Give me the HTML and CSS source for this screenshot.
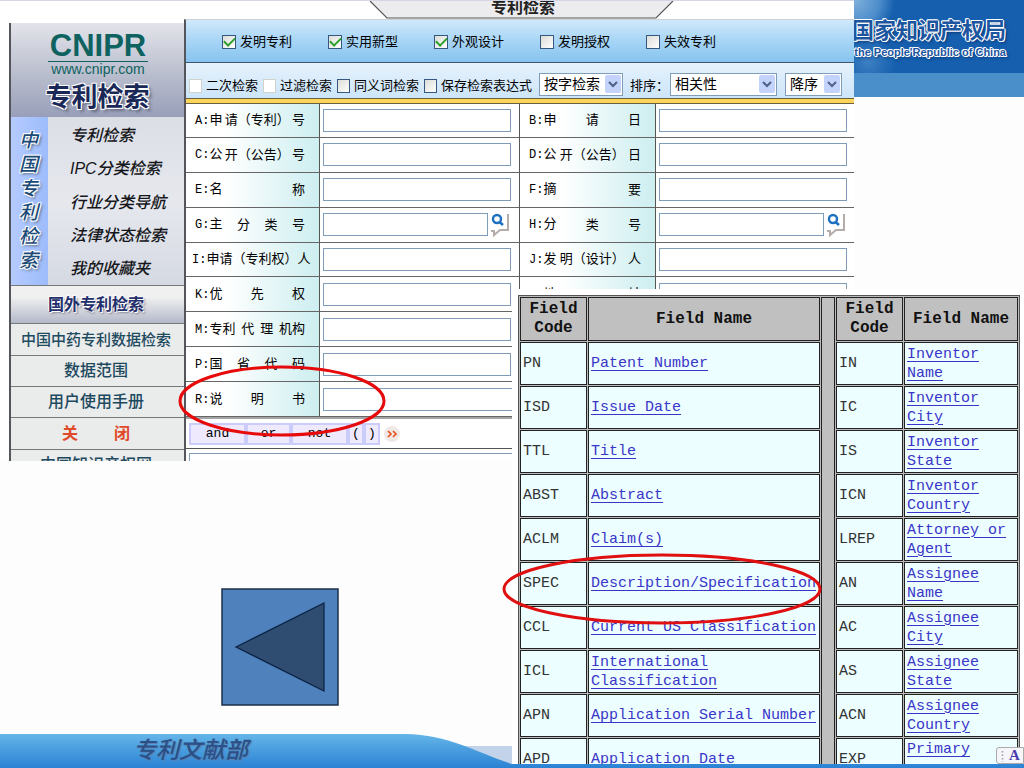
FILE: index.html
```html
<!DOCTYPE html>
<html lang="zh-CN">
<head>
<meta charset="utf-8">
<title>专利检索</title>
<link rel="stylesheet" href="styles.css">
</head>
<body>
<main class="slide">
  <header class="banner">
    <div class="banner-title">国家知识产权局</div>
    <div class="banner-sub">of the People'Republic of China</div>
  </header>

  <section class="cnipr">
    <div class="tab">
      <svg class="tab-shape" viewBox="0 0 308 18" width="308" height="18" aria-hidden="true"><path d="M1 0 18 17H287L304 0" fill="#ececee" stroke="#555" stroke-width="1.2"/></svg>
      <span class="tab-text">专利检索</span>
    </div>
    <div class="cnipr-body">
      <aside class="side">
        <div class="logo">
          <div class="logo-name">CNIPR</div>
          <div class="logo-url">www.cnipr.com</div>
          <div class="logo-title">专利检索</div>
        </div>
        <div class="group">
          <div class="group-name">中国专利检索</div>
          <nav class="group-links">
            <a href="#">专利检索</a>
            <a href="#">IPC分类检索</a>
            <a href="#">行业分类导航</a>
            <a href="#">法律状态检索</a>
            <a href="#">我的收藏夹</a>
          </nav>
        </div>
        <nav class="links">
          <a class="foreign" href="#">国外专利检索</a>
          <a class="long" href="#">中国中药专利数据检索</a>
          <a href="#">数据范围</a>
          <a href="#">用户使用手册</a>
          <a class="close" href="#"><span>关</span><span>闭</span></a>
          <a href="#">中国知识产权网</a>
        </nav>
      </aside>

      <form class="search">
        <div class="types">
          <label><input type="checkbox" checked>发明专利</label>
          <label><input type="checkbox" checked>实用新型</label>
          <label><input type="checkbox" checked>外观设计</label>
          <label><input type="checkbox">发明授权</label>
          <label><input type="checkbox">失效专利</label>
        </div>
        <div class="options">
          <label><input type="checkbox" disabled>二次检索</label>
          <label><input type="checkbox" disabled>过滤检索</label>
          <label><input type="checkbox">同义词检索</label>
          <label><input type="checkbox">保存检索表达式</label>
          <span class="pick mode"><select aria-label="检索方式"><option>按字检索</option></select><svg viewBox="0 0 16 18" width="16" height="18"><rect width="16" height="18" rx="2" fill="#c3d3fb"/><path d="M4 7l4 4 4-4" fill="none" stroke="#4d6185" stroke-width="2"/></svg></span>
          <label class="sort" for="sort">排序：</label>
          <span class="pick by"><select id="sort"><option>相关性</option></select><svg viewBox="0 0 16 18" width="16" height="18"><rect width="16" height="18" rx="2" fill="#c3d3fb"/><path d="M4 7l4 4 4-4" fill="none" stroke="#4d6185" stroke-width="2"/></svg></span>
          <span class="pick order"><select aria-label="顺序"><option>降序</option></select><svg viewBox="0 0 16 18" width="16" height="18"><rect width="16" height="18" rx="2" fill="#c3d3fb"/><path d="M4 7l4 4 4-4" fill="none" stroke="#4d6185" stroke-width="2"/></svg></span>
        </div>
        <div class="fields">
          <label for="fa"><span><i>A:</i>申</span><span>请（专利）</span><span>号</span></label><div><input id="fa" type="text"></div>
          <label for="fb"><span><i>B:</i>申</span><span>请</span><span>日</span></label><div><input id="fb" type="text"></div>
          <label for="fc"><span><i>C:</i>公</span><span>开（公告）</span><span>号</span></label><div><input id="fc" type="text"></div>
          <label for="fd"><span><i>D:</i>公</span><span>开（公告）</span><span>日</span></label><div><input id="fd" type="text"></div>
          <label for="fe"><span><i>E:</i>名</span><span>称</span></label><div><input id="fe" type="text"></div>
          <label for="ff"><span><i>F:</i>摘</span><span>要</span></label><div><input id="ff" type="text"></div>
          <label for="fg"><span><i>G:</i>主</span><span>分</span><span>类</span><span>号</span></label><div><input id="fg" class="short" type="text"><button type="button" class="look" aria-label="查找"><svg viewBox="0 0 22 26" width="22" height="26"><path d="M20 2V18H12L6 23V19H3" fill="none" stroke="#b4aca8" stroke-width="2"/><circle cx="9" cy="7" r="4" fill="none" stroke="#1d6fc0" stroke-width="2.4"/><path d="M11.500 10l3.500 3" stroke="#1d6fc0" stroke-width="2.600"/></svg></button></div>
          <label for="fh"><span><i>H:</i>分</span><span>类</span><span>号</span></label><div><input id="fh" class="short" type="text"><button type="button" class="look" aria-label="查找"><svg viewBox="0 0 22 26" width="22" height="26"><path d="M20 2V18H12L6 23V19H3" fill="none" stroke="#b4aca8" stroke-width="2"/><circle cx="9" cy="7" r="4" fill="none" stroke="#1d6fc0" stroke-width="2.4"/><path d="M11.500 10l3.500 3" stroke="#1d6fc0" stroke-width="2.600"/></svg></button></div>
          <label class="tight" for="fi"><span><i>I:</i>申请（专利权）人</span></label><div><input id="fi" type="text"></div>
          <label for="fj"><span><i>J:</i>发</span><span>明（设计）</span><span>人</span></label><div><input id="fj" type="text"></div>
          <label for="fk"><span><i>K:</i>优</span><span>先</span><span>权</span></label><div><input id="fk" type="text"></div>
          <label for="fl"><span><i>L:</i>地</span><span>址</span></label><div><input id="fl" type="text"></div>
          <label for="fm"><span><i>M:</i>专利</span><span>代</span><span>理</span><span>机构</span></label><div class="wide"><input id="fm" type="text"></div>
          <label for="fp"><span><i>P:</i>国</span><span>省</span><span>代</span><span>码</span></label><div class="wide"><input id="fp" type="text"></div>
          <label for="fr"><span><i>R:</i>说</span><span>明</span><span>书</span></label><div class="wide"><input id="fr" class="full" type="text"></div>
        </div>
        <div class="ops">
          <button type="button">and</button><button type="button" class="or">or</button><button type="button">not</button><button type="button" class="paren">(</button><button type="button" class="paren">)</button>
          <svg viewBox="0 0 18 18" width="18" height="18" aria-hidden="true"><circle cx="9" cy="9" r="8" fill="#f0e8e4"/><path d="M5 6l3 3-3 3M10 6l3 3-3 3" fill="none" stroke="#e8501a" stroke-width="1.6"/></svg>
        </div>
        <div class="expr"><textarea aria-label="检索表达式"></textarea></div>
      </form>
    </div>
  </section>

  <section class="codes">
    <table>
      <colgroup><col class="c-code"><col><col class="c-gap"><col class="c-code"><col class="c-name"></colgroup>
      <tr><th>Field Code</th><th>Field Name</th><td class="gap" rowspan="11"></td><th>Field Code</th><th>Field Name</th></tr>
      <tr><td>PN</td><td><a href="#">Patent Number</a></td><td>IN</td><td><a href="#">Inventor<br>Name</a></td></tr>
      <tr><td>ISD</td><td><a href="#">Issue Date</a></td><td>IC</td><td><a href="#">Inventor<br>City</a></td></tr>
      <tr><td>TTL</td><td><a href="#">Title</a></td><td>IS</td><td><a href="#">Inventor<br>State</a></td></tr>
      <tr><td>ABST</td><td><a href="#">Abstract</a></td><td>ICN</td><td><a href="#">Inventor<br>Country</a></td></tr>
      <tr><td>ACLM</td><td><a href="#">Claim(s)</a></td><td>LREP</td><td><a href="#">Attorney or<br>Agent</a></td></tr>
      <tr><td>SPEC</td><td><a href="#">Description/Specification</a></td><td>AN</td><td><a href="#">Assignee<br>Name</a></td></tr>
      <tr><td>CCL</td><td><a href="#">Current US Classification</a></td><td>AC</td><td><a href="#">Assignee<br>City</a></td></tr>
      <tr><td>ICL</td><td><a href="#">International<br>Classification</a></td><td>AS</td><td><a href="#">Assignee<br>State</a></td></tr>
      <tr><td>APN</td><td><a href="#">Application Serial Number</a></td><td>ACN</td><td><a href="#">Assignee<br>Country</a></td></tr>
      <tr><td>APD</td><td><a href="#">Application Date</a></td><td>EXP</td><td class="top"><a href="#">Primary</a></td></tr>
    </table>
  </section>

  <svg class="ring ring-spec-cn" viewBox="0 0 208 72" width="208" height="72" aria-hidden="true"><ellipse cx="104" cy="36" rx="102" ry="34" fill="none" stroke="#e60a0a" stroke-width="3"/></svg>
  <svg class="ring ring-spec-us" viewBox="0 0 320 72" width="320" height="72" aria-hidden="true"><ellipse cx="160" cy="36" rx="158" ry="34" fill="none" stroke="#e01010" stroke-width="3"/></svg>

  <button type="button" class="back" aria-label="返回"><svg viewBox="0 0 118 118" width="118" height="118"><rect x="1" y="1" width="116" height="116" fill="#4f81bd" stroke="#1c2f48" stroke-width="1.500"/><path d="M15 59 103 15V103Z" fill="#2f4d71" stroke="#0b2244" stroke-width="1.200"/></svg></button>

  <footer class="foot">
    <svg class="wave" viewBox="0 0 1024 34" preserveAspectRatio="none" aria-hidden="true">
      <defs><linearGradient id="w" x1="0" y1="0" x2="0" y2="1"><stop offset="0" stop-color="#64b5e8"/><stop offset="1" stop-color="#2b82d4"/></linearGradient></defs>
      <path d="M462 12H512V34H462Z" fill="#c3d3ea"/>
      <path d="M0 0H405C450 1 475 18 512 30H1024V34H0Z" fill="url(#w)"/>
    </svg>
    <span class="foot-text">专利文献部</span>
  </footer>

  <div class="ime"><svg viewBox="0 0 3 12" width="3" height="12" aria-hidden="true"><path d="M1.500 1v11" stroke="#9a9aa8" stroke-width="1.500" stroke-dasharray="1.500 2"/></svg><b>A</b></div>
</main>
</body>
</html>
```
FILE: styles.css
```css
* { box-sizing: border-box; }
body {
  margin: 0;
  font-family: "Liberation Sans", "Noto Sans CJK SC", sans-serif;
  font-size: 13px;
  color: #000;
}
a { color: inherit; text-decoration: none; }
input, select, button, textarea { font: inherit; color: inherit; margin: 0; }

.slide {
  position: relative;
  display: flex;
  flex-direction: column;
  justify-content: space-between;
  min-height: 100vh;
  overflow: hidden;
  background: #fdfdfd;
}

.banner {
  height: 97px;
  padding: 16px 18px 0 0;
  border-bottom: 24px solid #4a8fca;
  background: radial-gradient(circle at 855px 0, #7fb0dc 0, #4e8ecb 24px, transparent 40px),
    radial-gradient(circle at 868px 62px, #3d7fc2 0, transparent 28px), #155fae;
  text-align: right;
  white-space: nowrap;
  color: #1c55a0;
  text-shadow: 1px 0 #fff, -1px 0 #fff, 0 1px #fff, 0 -1px #fff, 1px 1px #fff, -1px -1px #fff, 2px 2px 3px #0a3470;
}
.banner-title { font-size: 22px; font-weight: 700; line-height: 30px; }
.banner-sub { font-size: 11px; font-weight: 700; line-height: 12px; }

.cnipr {
  position: absolute;
  left: 0;
  right: 170px;
  top: 0;
  height: 461px;
  overflow: hidden;
  border-top: 1px solid #d3d6e6;
  background: #fff;
}
.tab { display: flex; height: 18px; padding-left: 369px; }
.tab-shape { flex: none; }
.tab-text { margin-left: -186px; font-size: 16px; font-weight: 700; line-height: 13px; color: #222; }
.cnipr-body { display: flex; padding-left: 9px; }

.side {
  flex: none;
  width: 175px;
  margin-top: 4px;
  border-left: 2px solid #55565c;
  background: #eaebeb;
}
.logo {
  height: 94px;
  padding-top: 8px;
  background: linear-gradient(#e3e4ea, #b5bacb 60%, #999fb9);
  text-align: center;
  color: #0e625f;
}
.logo-name { width: 100px; margin: 0 0 0 37px; border-bottom: 1px solid #0e625f; font-size: 31px; font-weight: 700; line-height: 30px; }
.logo-url { width: 100px; margin-left: 37px; font-size: 14px; line-height: 15px; }
.logo-title {
  font-size: 26px;
  font-weight: 700;
  line-height: 40px;
  color: #1a2858;
  text-shadow: 1px 1px #fff, -1px -1px #fff, 1px -1px #fff, -1px 1px #fff, 3px 3px 3px #666b80;
}
.group { display: flex; height: 169px; border-bottom: 1px solid #77787c; background: linear-gradient(#dcdee6, #e6e8ee 50%, #d5d9e2); }
.group-name {
  flex: none;
  width: 37px;
  padding: 12px 8px 0;
  background: linear-gradient(90deg, #b5cbff, #9dbcfb);
  font-size: 19px;
  font-style: italic;
  font-weight: 500;
  line-height: 24px;
  color: #1c4b78;
  text-shadow: 1px 1px #fff, -1px -1px #fff, 1px -1px #fff, -1px 1px #fff, 2px 2px 3px #567;
}
.group-links { display: flex; flex: 1; flex-direction: column; justify-content: space-between; padding: 2px 0 0 22px; font-size: 16px; font-style: italic; font-weight: 500; line-height: 33px; white-space: nowrap; color: #15161a; }
.links a {
  display: flex;
  align-items: center;
  justify-content: center;
  height: 31px;
  border-bottom: 1px solid #77787c;
  padding-right: 3px;
  font-size: 16px;
  font-weight: 500;
  line-height: 20px;
  color: #1e4a60;
  white-space: nowrap;
}
.links a.foreign { height: 38px; background: linear-gradient(#f0f0f0 30%, #b4b9c9); font-weight: 700; color: #24306c; text-shadow: 1px 1px #fff, -1px -1px #fff, 2px 2px 2px #889; }
.links a.long { height: 32px; font-size: 15px; }
.links a.close { height: 32px; gap: 36px; font-weight: 700; color: #e04a2a; }

.search { flex: 1; min-width: 0; border-left: 2px solid #55565c; border-top: 1px solid #c8d0d8; }
.search label { white-space: nowrap; }
.types {
  display: flex;
  align-items: center;
  gap: 36px;
  height: 43px;
  padding: 2px 0 0 36px;
  border-bottom: 1px solid #3c5670;
  background: linear-gradient(#d0e9fb, #a7d5f6 50%, #86c3ef);
}
.types label, .options label { display: flex; align-items: center; gap: 4px; line-height: 16px; }
input[type="checkbox"] {
  appearance: none;
  flex: none;
  display: grid;
  place-items: center;
  width: 14px;
  height: 14px;
  border: 1px solid #36577f;
  background: linear-gradient(135deg, #dcdcd7, #fff);
}
.options input[type="checkbox"] { width: 13px; }
input[type="checkbox"]:disabled { border-color: #cfd2cd; background: #fff; }
input[type="checkbox"]:checked::before {
  content: "";
  width: 9px;
  height: 5px;
  margin-top: -3px;
  border: solid #2aa02a;
  border-width: 0 0 2px 2px;
  transform: rotate(-45deg);
}
.options {
  display: flex;
  align-items: center;
  gap: 5px;
  height: 36px;
  padding: 11px 0 0 3px;
  border-bottom: 1px solid #6b6040;
  background: linear-gradient(#e6f2fc, #cce5f9);
}
.options .sort { padding-left: 2px; }
.pick { position: relative; flex: none; height: 23px; margin-top: -4px; }
.pick select { appearance: none; width: 100%; height: 23px; padding: 0 0 0 4px; border: 1px solid #7f9db9; border-radius: 0; background: #fff; font-size: 14px; line-height: 20px; }
.pick svg { position: absolute; right: 2px; top: 2px; pointer-events: none; }
.mode { width: 84px; margin-left: 2px; }
.by { width: 107px; margin-left: -4px; }
.order { width: 57px; margin-left: 3px; }

.fields {
  display: grid;
  grid-template-columns: 134px 200px 136px 1fr;
  grid-template-rows: repeat(9, 1fr);
  height: 320px;
  border-top: 4px solid #fbd55b;
  border-bottom: 2px solid #a4a4a4;
}
.fields > label {
  display: flex;
  align-items: center;
  justify-content: space-between;
  padding: 0 14px 0 9px;
  border-right: 1px solid #555;
  border-bottom: 1px solid #666;
  background: linear-gradient(90deg, #fff 30%, #cdeef0);
  line-height: 18px;
}
.fields > label:nth-of-type(-n+2), .fields > div:nth-of-type(-n+2) { border-top: 1px solid #6b6040; }
.fields > label.tight { padding: 0 9px 0 6px; }
.fields > label i { font-family: "Liberation Mono", monospace; font-size: 12px; font-style: normal; }
.fields > div { display: flex; align-items: center; padding: 0 8px 0 3px; border-bottom: 1px solid #666; }
.fields > div:nth-of-type(odd) { border-right: 1px solid #555; }
.fields > div.wide { grid-column: 2 / -1; }
.fields input { width: 188px; height: 23px; border: 1px solid #7f9db9; background: #fff; }
.fields input.short { width: 165px; }
.fields input.full { width: 100%; }
.look { display: block; height: 26px; padding: 0; border: 0; background: none; }
.look svg { display: block; }

.ops { display: flex; align-items: center; height: 30px; padding-left: 3px; border-bottom: 1px solid #555; }
.ops button { width: 57px; height: 22px; padding: 0; border: 2px solid #ccccfb; background: #eee9fc; font-family: "Liberation Mono", monospace; font-size: 13px; line-height: 16px; }
.ops button.or { width: 45px; }
.ops button.paren { width: 16px; }
.ops svg { margin-left: 3px; }
.expr { padding: 4px 3px; }
.expr textarea { display: block; width: 100%; height: 40px; border: 1px solid #7f9db9; resize: none; }

.codes {
  position: absolute;
  left: 50%;
  right: 0;
  top: 289px;
  bottom: 4px;
  z-index: 1;
  overflow: hidden;
  padding: 6px 4px 0 6px;
  background: #fff;
  font-family: "Liberation Mono", monospace;
}
.codes table { width: 100%; table-layout: fixed; border: 1px solid #555; border-spacing: 1px; background: #bcbcbc; font-size: 15px; line-height: 19px; }
.c-code { width: 67px; }
.c-gap { width: 14px; }
.c-name { width: 114px; }
.codes td, .codes th { height: 43px; padding: 1px 2px; border: 1px solid #222; background: #ecfeff; color: #333; }
.codes th { height: 44px; padding: 1px 4px; background: #c0c0c0; font-size: 16px; color: #111; }
.codes td.gap { background: #c0c0c0; }
.codes td.top { vertical-align: top; }
.codes td { white-space: nowrap; }
.codes a { color: #3a35c8; text-decoration: underline; text-underline-offset: 3px; text-decoration-thickness: 1px; }

.ring { position: absolute; z-index: 2; pointer-events: none; }
.ring-spec-cn { left: 178px; top: 365px; }
.ring-spec-us { left: 502px; top: 553px; }

.back { position: absolute; left: 221px; top: 588px; padding: 0; border: 0; background: none; }
.back svg { display: block; }

.foot { position: relative; height: 34px; padding-left: 133px; }
.wave { position: absolute; inset: 0; width: 100%; height: 100%; }
.foot-text { position: relative; font-size: 23px; font-style: italic; font-weight: 500; line-height: 32px; color: #2b4f86; text-shadow: 1px 1px 1px #5b7fae; }

.ime {
  position: absolute;
  right: 0;
  bottom: 4px;
  z-index: 3;
  display: flex;
  align-items: center;
  gap: 5px;
  width: 28px;
  height: 17px;
  padding-left: 4px;
  border: 1px solid #aaa;
  border-radius: 3px 0 0 3px;
  background: #f6f6fa;
}
.ime b { font-family: "Liberation Serif", serif; font-size: 15px; line-height: 15px; color: #4a3fb0; }
```
